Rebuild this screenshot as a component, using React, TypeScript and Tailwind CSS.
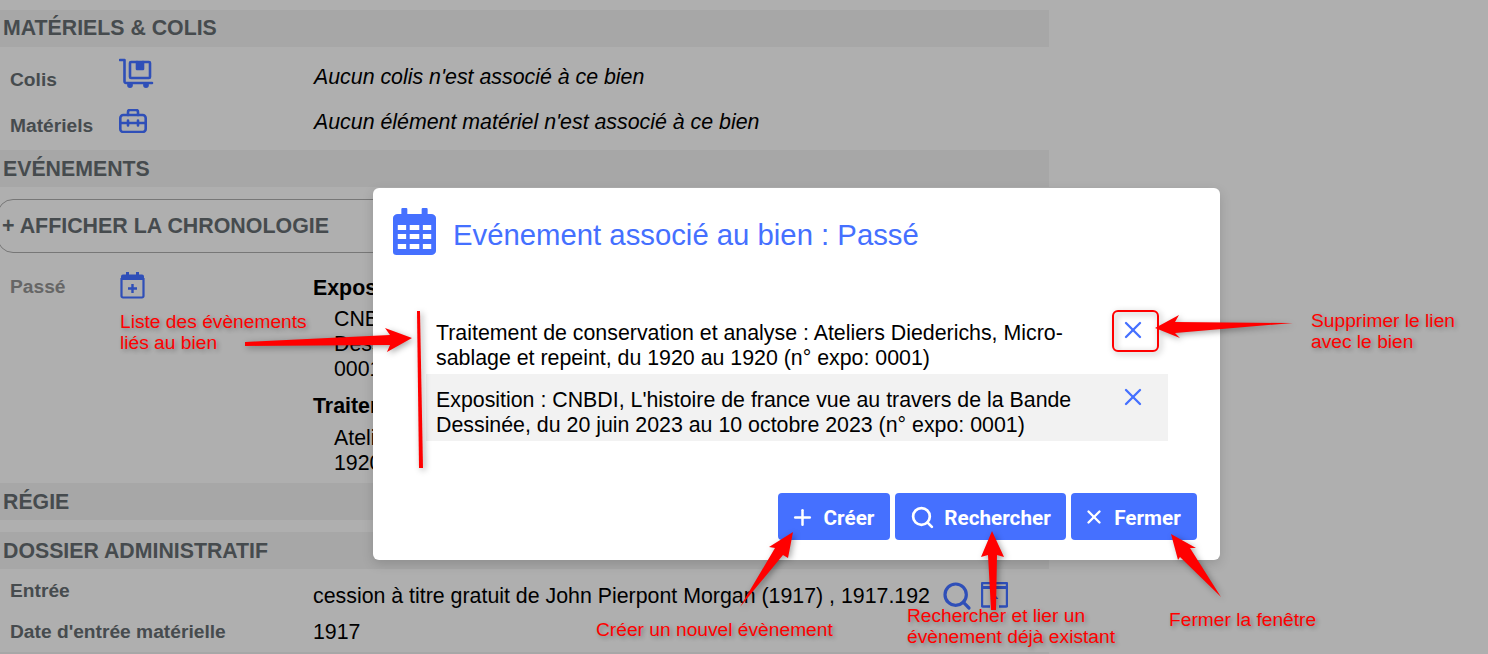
import { Plus, Search, X } from "lucide-react"

const sans = "font-['Liberation_Sans',Arial,sans-serif]"

function SectionTitle({ label, className = "pt-[3px]" }: { label: string; className?: string }) {
  return (
    <div className={`flex h-[37px] w-[1049px] items-center bg-[#a7a7a7] pl-[3px] text-[21.300px] font-bold text-[#464b4e] ${className}`}>
      {label}
    </div>
  )
}

function DollyIcon() {
  return (
    <svg width="35" height="30" viewBox="0 0 35 30" fill="none" stroke="#2f4fb8" strokeWidth="2.600" strokeLinecap="round" strokeLinejoin="round">
      <path d="M1 2h4.500v21.500a1.500 1.500 0 0 0 1.500 1.500h26" />
      <rect x="11" y="4" width="20" height="16" rx="1" />
      <path d="M18 4v7h6V4" fill="#2f4fb8" />
      <circle cx="11" cy="27" r="1.600" fill="#2f4fb8" />
      <circle cx="27" cy="27" r="1.600" fill="#2f4fb8" />
    </svg>
  )
}

function ToolboxIcon() {
  return (
    <svg width="28" height="24" viewBox="0 0 28 24" fill="none" stroke="#2f4fb8" strokeWidth="2.600" strokeLinecap="round" strokeLinejoin="round">
      <path d="M9 6V3a2 2 0 0 1 2-2h6a2 2 0 0 1 2 2v3" />
      <rect x="1.300" y="6" width="25.400" height="17" rx="3" />
      <path d="M1.300 14h25.400" />
      <path d="M9 11.500v5M19 11.500v5" />
    </svg>
  )
}

function CalendarPlusIcon() {
  return (
    <svg width="25" height="28" viewBox="0 0 25 28" fill="none">
      <path d="M1.500 8h22v17a1.500 1.500 0 0 1-1.500 1.500H3A1.500 1.500 0 0 1 1.500 25z" stroke="#2f4fb8" strokeWidth="2.200" />
      <path d="M1 9V5.500A2 2 0 0 1 3 3.500h3V1h3v2.500h7V1h3v2.500h3a2 2 0 0 1 2 2V9z" fill="#2f4fb8" />
      <path d="M12.500 13v9M8 17.500h9" stroke="#2f4fb8" strokeWidth="2.400" />
    </svg>
  )
}

function CalendarIcon() {
  return (
    <svg width="43" height="47" viewBox="0 0 36 47" preserveAspectRatio="none" className="shrink-0">
      <path
        fill="#4570ff"
        fillRule="evenodd"
        d="M8 0h3a1 1 0 0 1 1 1v5h12V1a1 1 0 0 1 1-1h3a1 1 0 0 1 1 1v5h3a4 4 0 0 1 4 4v33a4 4 0 0 1-4 4H3a3 3 0 0 1-3-3V10a4 4 0 0 1 4-4h3V1a1 1 0 0 1 1-1z
        M4 17v5h7v-5z M14 17v5h8v-5z M25 17v5h7v-5z
        M4 26v5h7v-5z M14 26v5h8v-5z M25 26v5h7v-5z
        M4 36v5h7v-5z M14 36v5h8v-5z M25 36v5h7v-5z"
      />
    </svg>
  )
}

function WindowIcon() {
  return (
    <svg width="27" height="26" viewBox="0 0 27 26" fill="none" stroke="#2f4fb8" strokeWidth="2.400">
      <path d="M9 24.500H2A1 1 0 0 1 1 23.500V2a1 1 0 0 1 1-1h23a1 1 0 0 1 1 1v21.500a1 1 0 0 1-1 1h-7" />
      <path d="M1 5.500h25" strokeWidth="3" />
      <path d="M13.500 12l4 5h-2.500v8h-3v-8H9.500z" fill="#2f4fb8" stroke="none" />
    </svg>
  )
}

function ModalButton({ icon, label, className }: { icon: React.ReactNode; label: string; className: string }) {
  return (
    <button className={`flex h-[47px] items-center justify-center gap-[9px] rounded-[4px] bg-[#4570ff] font-['Roboto',sans-serif] text-[20.700px] font-bold text-white ${className}`}>
      {icon}
      <span className="pt-[4px]">{label}</span>
    </button>
  )
}

function Annotation({ className, children }: { className: string; children: React.ReactNode }) {
  return (
    <div className={`absolute text-[19.200px] leading-[21px] text-[#ff0000] [text-shadow:2px_2px_4px_rgba(0,0,0,0.3)] ${className}`}>
      {children}
    </div>
  )
}

function Arrows() {
  return (
    <svg width="1488" height="654" className="pointer-events-none absolute left-0 top-0 drop-shadow-[2px_2px_3px_rgba(0,0,0,0.35)]" fill="#ff0000">
      <polygon points="245,342 390,335 385,328 412,338 387,352 390,345 245,346" />
      <polygon points="417,311 420,311 423,468 419,468" />
      <polygon points="1293,323 1175,322 1179,315 1155,328 1180,338 1175,333" />
      <polygon points="793,532 769,547 775,548 740,607 783,555 788,558" />
      <polygon points="992,531 981,557 988,555 991,610 996,610 997,555 1004,557" />
      <polygon points="1171,534 1178,560 1180,557 1221,597 1190,548 1196,548" />
      <rect x="1113" y="311" width="45" height="40" rx="5" fill="none" stroke="#ff0000" strokeWidth="2" />
    </svg>
  )
}

export default function App() {
  return (
    <div className={`relative h-[654px] w-[1488px] overflow-hidden bg-[#afafaf] pt-[10px] text-black ${sans}`}>
      <SectionTitle label="MATÉRIELS & COLIS" className="pt-[1px]" />
      <div className="flex h-[52px] items-center pl-[10px]">
        <div className="w-[109px] pt-[14px] text-[19.200px] font-bold text-[#464b4e]">Colis</div>
        <div className="w-[195px]"><DollyIcon /></div>
        <div className="pt-[8px] text-[21.350px] italic">Aucun colis n'est associé à ce bien</div>
      </div>
      <div className="flex h-[51px] items-center pl-[10px]">
        <div className="w-[109px] pt-[4px] text-[19.200px] font-bold text-[#464b4e]">Matériels</div>
        <div className="mb-[8px] w-[195px]"><ToolboxIcon /></div>
        <div className="pb-[4px] text-[21.350px] italic">Aucun élément matériel n'est associé à ce bien</div>
      </div>
      <SectionTitle label="EVÉNEMENTS" />
      <div className="mt-[12px] ml-[-3px] flex h-[54px] w-[400px] items-center rounded-[16px] border border-[#777777] pl-[4px] text-[21.400px] font-bold text-[#464b4e]">
        + AFFICHER LA CHRONOLOGIE
      </div>
      <div className="flex h-[230px] pl-[10px] pt-[18px]">
        <div className="w-[110px] pt-[2px] text-[19.200px] font-bold text-[#666666]">Passé</div>
        <div className="w-[193px]"><CalendarPlusIcon /></div>
        <div className="text-[21.350px] leading-[25px]">
          <div className="mt-[5px] font-bold">Exposition</div>
          <div className="mt-[6px] ml-[21px]">CNBDI<br />Dessinée<br />0001</div>
          <div className="mt-[12px] font-bold">Traitement</div>
          <div className="mt-[7px] ml-[21px]">Ateliers<br />1920</div>
        </div>
      </div>
      <SectionTitle label="RÉGIE" />
      <div className="h-[12px]" />
      <SectionTitle label="DOSSIER ADMINISTRATIF" />
      <div className="flex h-[44px] items-center pl-[10px]">
        <div className="w-[303px] text-[19.200px] font-bold text-[#464b4e]">Entrée</div>
        <div className="pt-[10px] text-[21.350px]">cession à titre gratuit de John Pierpont Morgan (1917) , 1917.192</div>
        <Search className="ml-[11px] mt-[10px] size-[32px] text-[#2f4fb8]" strokeWidth={2.400} />
        <div className="ml-[8px] mt-[7px]"><WindowIcon /></div>
      </div>
      <div className="flex h-[36px] items-center pl-[10px] pt-[2px]">
        <div className="w-[303px] text-[19.200px] font-bold text-[#464b4e]">Date d'entrée matérielle</div>
        <div className="text-[21.350px]">1917</div>
      </div>
      <div className="mt-[3px] h-[2px] w-[1049px] bg-[#a7a7a7]" />

      {/* Modal */}
      <div className="absolute left-[373px] top-[188px] flex h-[372px] w-[847px] flex-col rounded-[6px] bg-white shadow-[0_4px_12px_rgba(0,0,0,0.15)]">
        <div className="flex items-center gap-[17px] pl-[20px] pt-[20px]">
          <CalendarIcon />
          <div className="pt-[6px] text-[29.300px] leading-[34px] text-[#4570ff]">Evénement associé au bien : Passé</div>
        </div>
        <div className="ml-[53px] mt-[65px] w-[742px] text-[21.350px] leading-[25px]">
          <div className="relative h-[54px] pl-[10px] pr-[90px] pt-[1px]">
            <div>Traitement de conservation et analyse : Ateliers Diederichs, Micro-sablage et repeint, du 1920 au 1920 (n° expo: 0001)</div>
            <X className="absolute left-[693px] top-[-4px] size-[28px] text-[#4570ff]" strokeWidth={2} />
          </div>
          <div className="relative h-[67px] bg-[#f2f2f2] pl-[10px] pr-[90px] pt-[14px]">
            <div>Exposition : CNBDI, L'histoire de france vue au travers de la Bande Dessinée, du 20 juin 2023 au 10 octobre 2023 (n° expo: 0001)</div>
            <X className="absolute left-[693px] top-[9px] size-[28px] text-[#4570ff]" strokeWidth={2} />
          </div>
        </div>
        <div className="mt-auto mb-[20px] mr-[23px] flex justify-end gap-[5px]">
          <ModalButton className="w-[112px] pr-[4px]" label="Créer" icon={<Plus className="mt-[2px] size-[25px]" strokeWidth={2.400} />} />
          <ModalButton className="w-[171px]" label="Rechercher" icon={<Search className="mt-[1px] size-[25px]" strokeWidth={2.600} />} />
          <ModalButton className="w-[126px] pr-[4px]" label="Fermer" icon={<X className="size-[22px]" strokeWidth={2.600} />} />
        </div>
      </div>

      <Arrows />
      <Annotation className="left-[120px] top-[311px]">Liste des évènements<br />liés au bien</Annotation>
      <Annotation className="left-[1311px] top-[310px]">Supprimer le lien<br />avec le bien</Annotation>
      <Annotation className="left-[596px] top-[619px]">Créer un nouvel évènement</Annotation>
      <Annotation className="left-[907px] top-[605px]">Rechercher et lier un<br />évènement déjà existant</Annotation>
      <Annotation className="left-[1169px] top-[609px]">Fermer la fenêtre</Annotation>
    </div>
  )
}
